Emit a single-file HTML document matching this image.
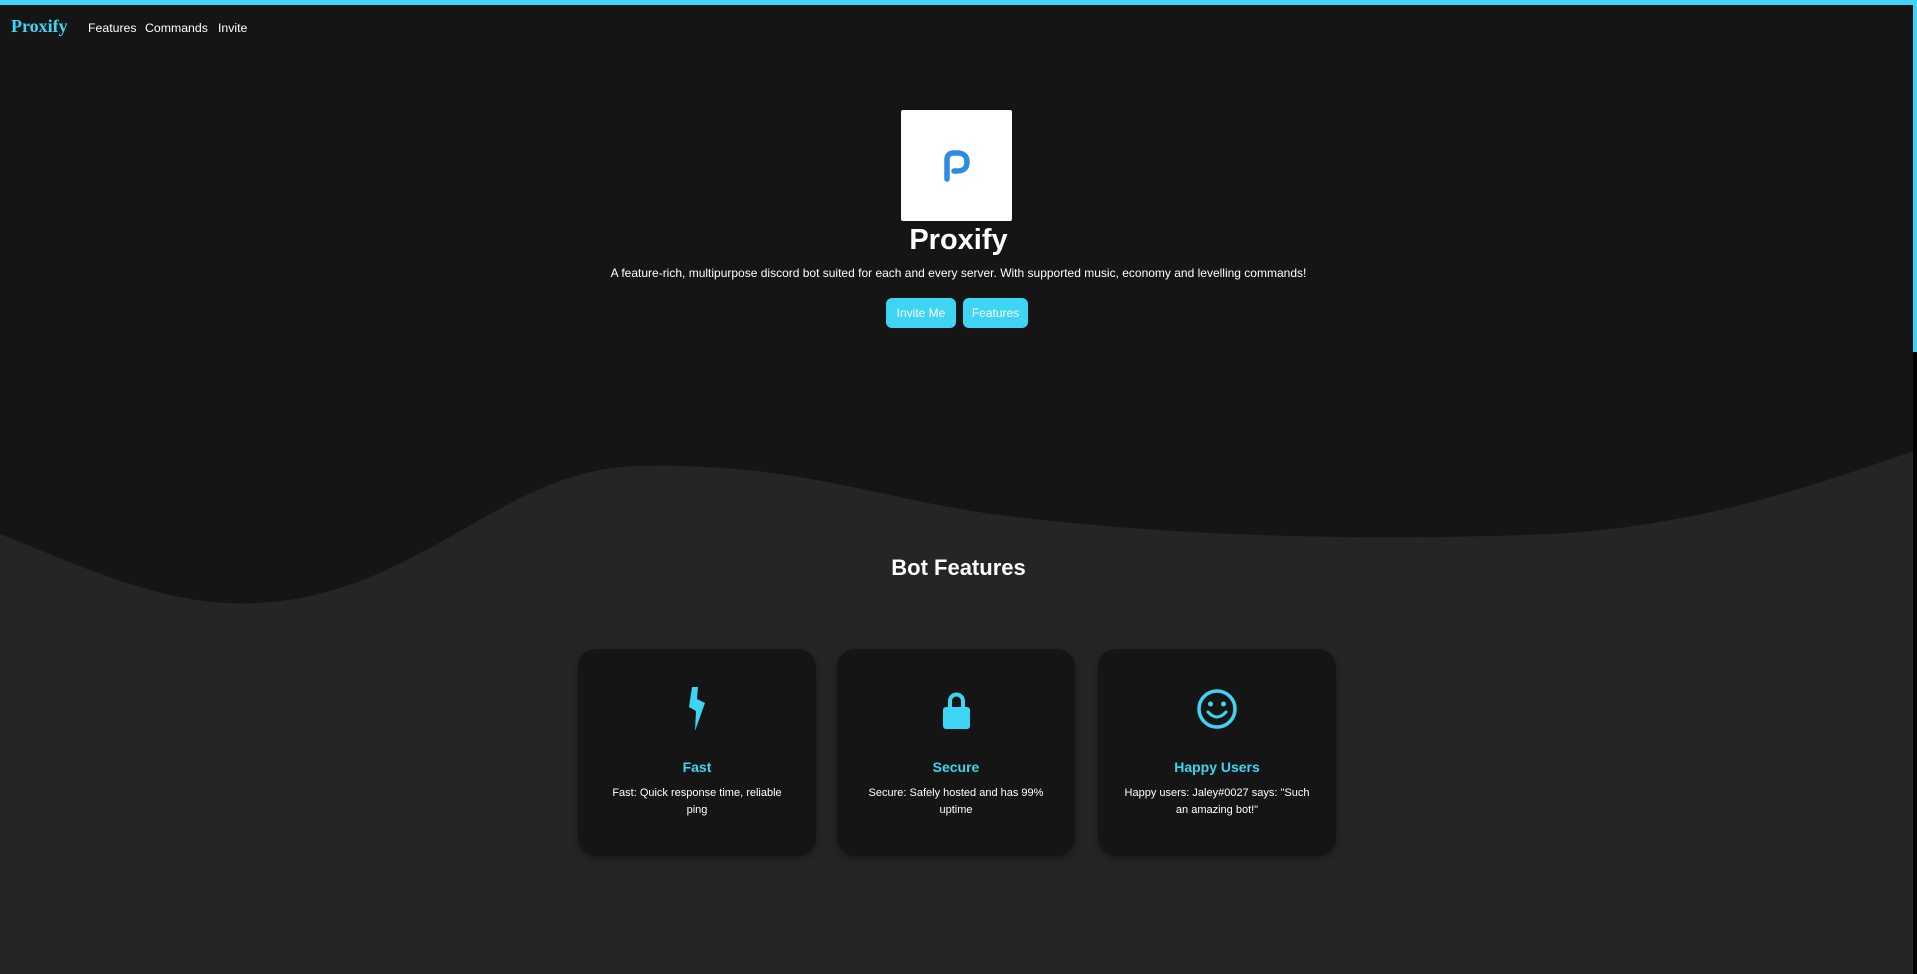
<!DOCTYPE html>
<html><head><meta charset="utf-8"><style>
*{margin:0;padding:0;box-sizing:border-box}
html,body{width:1917px;height:974px;overflow:hidden;background:#151515;font-family:"Liberation Sans",sans-serif;color:#fff}
.top{position:absolute;left:0;top:0;width:1917px;height:5px;background:#3dd5f3}
.sb{position:absolute;right:0;top:0;width:4px;height:974px;background:#000}
.sb i{position:absolute;left:0;top:0;width:4px;height:352px;background:#3dd5f3}
.brand{position:absolute;left:11px;top:16px;font-family:"Liberation Serif",serif;font-weight:bold;font-size:18px;color:#3dd5f3}
.nav a{position:absolute;top:21px;font-size:12.3px;color:#fff;text-decoration:none}
.logo{position:absolute;left:901px;top:110px;width:111px;height:111px;background:#fff;border-radius:2px}
h1{position:absolute;left:0;width:1917px;top:224px;text-align:center;font-size:29px;font-weight:bold;color:#fff}
.sub{position:absolute;left:0;width:1917px;top:266px;text-align:center;font-size:12px}
.btn{position:absolute;top:298px;height:30px;background:#3dd5f3;color:#fff;font-size:12px;line-height:30px;text-align:center;border-radius:6px}
svg.wave{position:absolute;left:0;top:0}
h2{position:absolute;left:0;width:1917px;top:555px;text-align:center;font-size:22px;font-weight:bold}
.card{position:absolute;top:649px;width:238px;height:207px;background:#151515;border-radius:18px;box-shadow:0 3px 8px rgba(0,0,0,.35);text-align:center}
.card .ic{position:absolute;left:0;width:100%;top:38px;height:44px}
.card h3{position:absolute;left:0;width:100%;top:110px;font-size:14px;color:#3dd5f3;font-weight:bold}
.card p{position:absolute;left:24px;right:24px;top:136px;font-size:11px;line-height:17px}
</style></head><body>
<svg class="wave" width="1917" height="974"><path d="M0 534 C90 570 170 608 257 603 C420 595 500 470 636 466 C800 462 880 500 1000 515 C1200 540 1400 540 1553 534 C1700 525 1800 490 1917 450 L1917 974 L0 974 Z" fill="#252525"/></svg>
<div class="top"></div>
<div class="sb"><i></i></div>
<div class="brand">Proxify</div>
<div class="nav"><a style="left:88px">Features</a><a style="left:145px">Commands</a><a style="left:218px">Invite</a></div>
<div class="logo"><svg width="111" height="111" viewBox="0 0 111 111"><path d="M46 69 V50 Q46 43 53 43 H56 Q66 43 66 52 Q66 61 56 61 H53" fill="none" stroke="#2f8be0" stroke-width="5.5" stroke-linecap="round"/></svg></div>
<h1>Proxify</h1>
<div class="sub">A feature-rich, multipurpose discord bot suited for each and every server. With supported music, economy and levelling commands!</div>
<div class="btn" style="left:886px;width:70px">Invite Me</div>
<div class="btn" style="left:963px;width:65px">Features</div>
<h2>Bot Features</h2>
<div class="card" style="left:578px"><svg class="ic" viewBox="0 0 238 44"><path d="M114 0 L120 0 L119 12 L127 16 L117 44 L118 24 L111 20 Z" fill="#3dd5f3"/></svg><h3>Fast</h3><p>Fast: Quick response time, reliable ping</p></div>
<div class="card" style="left:837px"><svg class="ic" viewBox="0 0 238 44"><path d="M113 22 V14 A6.5 6.5 0 0 1 126 14 V22" fill="none" stroke="#3dd5f3" stroke-width="4"/><rect x="106" y="20" width="27" height="22" rx="3" fill="#3dd5f3"/></svg><h3>Secure</h3><p>Secure: Safely hosted and has 99% uptime</p></div>
<div class="card" style="left:1098px"><svg class="ic" viewBox="0 0 238 44"><circle cx="119" cy="22" r="18" fill="none" stroke="#3dd5f3" stroke-width="3.5"/><circle cx="112.5" cy="17" r="2.5" fill="#3dd5f3"/><circle cx="125.5" cy="17" r="2.5" fill="#3dd5f3"/><path d="M110 25 Q119 35 128 25" fill="none" stroke="#3dd5f3" stroke-width="3" stroke-linecap="round"/></svg><h3>Happy Users</h3><p>Happy users: Jaley#0027 says: "Such an amazing bot!"</p></div>
</body></html>
